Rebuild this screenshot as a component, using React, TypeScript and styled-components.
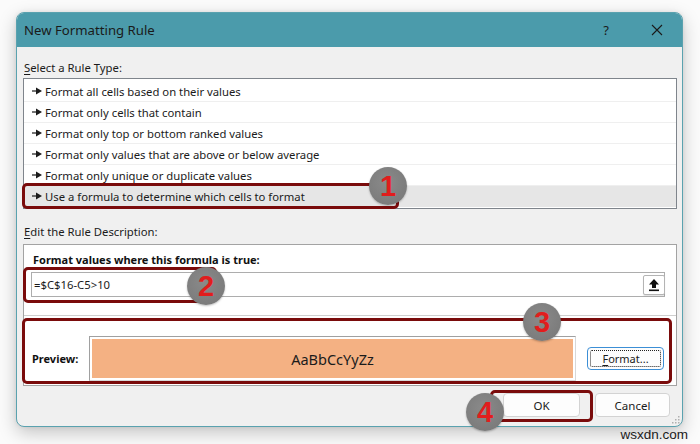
import React from 'react';
import styled, { createGlobalStyle } from 'styled-components';

const GlobalStyle = createGlobalStyle`
  html, body {
    margin: 0;
    padding: 0;
    background: #ffffff;
  }
  body {
    font-family: "Segoe UI", "Noto Sans", "Liberation Sans", sans-serif;
    color: #1b1b1b;
  }
`;

const Stage = styled.div`
  position: relative;
  width: 700px;
  height: 444px;
  overflow: hidden;
  box-sizing: border-box;
  padding: 12px 0 0 16px;
  background: #fbfbfb;
`;

const Dialog = styled.div`
  position: relative;
  width: 667px;
  height: 415px;
  box-sizing: border-box;
  display: flex;
  flex-direction: column;
  border: 1px solid #5aa2af;
  border-radius: 8px;
  background: #f0f0f0;
  box-shadow: 0 6px 18px rgba(0, 0, 0, 0.22), 0 0 4px rgba(0, 0, 0, 0.08);
  overflow: hidden;
`;

const TitleBar = styled.div`
  height: 34px;
  flex: none;
  display: flex;
  align-items: center;
  padding-left: 7px;
  background: #4b9bab;
`;

const Title = styled.div`
  flex: 1;
  font-size: 13.2px;
  color: #1a1a1a;
`;

const CaptionButton = styled.div<{ $w: number }>`
  width: ${(p) => p.$w}px;
  height: 34px;
  display: flex;
  align-items: center;
  justify-content: center;
  font-size: 13px;
  color: #1a1a1a;
`;

const Body = styled.div`
  flex: 1;
  display: flex;
  flex-direction: column;
  padding: 13px 5px 9px 6px;
`;

const SectionLabel = styled.div<{ $top?: number }>`
  font-size: 11.3px;
  line-height: 16px;
  margin-top: ${(p) => p.$top ?? 0}px;
  padding-left: 1px;
  color: #1b1b1b;
`;

const Key = styled.span`
  text-decoration: underline;
  text-underline-offset: 2px;
`;

const RuleList = styled.div`
  margin-top: 2px;
  height: 131px;
  box-sizing: border-box;
  border: 1px solid #7f858c;
  background: #ffffff;
  padding-top: 2px;
`;

const RuleRow = styled.div<{ $selected?: boolean }>`
  height: 21px;
  box-sizing: border-box;
  display: flex;
  align-items: center;
  gap: 3px;
  padding-left: 8px;
  font-size: 11.3px;
  color: #1b1b1b;
  background: ${(p) => (p.$selected ? '#e6e6e6' : 'transparent')};
  border-bottom: 1px solid ${(p) => (p.$selected ? 'transparent' : '#efefef')};
`;

const Panel = styled.div`
  margin-top: 4px;
  height: 142px;
  box-sizing: border-box;
  border: 1px solid #a3a3a3;
  background: #ffffff;
  display: flex;
  flex-direction: column;
  padding-top: 7px;
`;

const FormulaCaption = styled.div`
  font-size: 11px;
  line-height: 16px;
  font-weight: 700;
  padding-left: 9px;
  color: #111;
`;

const FormulaInput = styled.div`
  margin: 4px 11px 0 7px;
  height: 25px;
  box-sizing: border-box;
  border: 1px solid #adadad;
  display: flex;
  align-items: center;
  justify-content: space-between;
  padding: 0 0 0 2px;
  font-size: 11.3px;
  color: #1b1b1b;
`;

const CollapseButton = styled.div`
  width: 22px;
  height: 20px;
  box-sizing: border-box;
  border: 1px solid #b4b4b4;
  border-radius: 2px;
  background: #fff;
  box-shadow: 0 1px 1px rgba(0, 0, 0, 0.12);
  display: flex;
  align-items: center;
  justify-content: center;
  margin-right: -1px;
`;

const Divider = styled.div`
  margin-top: 18px;
  height: 1px;
  background: #cfcfcf;
`;

const PreviewRow = styled.div`
  flex: 1;
  display: flex;
  align-items: center;
  padding: 20px 0 4px 8px;
`;

const PreviewLabel = styled.div`
  width: 57px;
  font-size: 11px;
  font-weight: 700;
  color: #111;
`;

const Swatch = styled.div`
  width: 487px;
  height: 45px;
  box-sizing: border-box;
  border: 1px solid #a0a0a0;
  border-right-color: #d8d8d8;
  border-bottom-color: #d8d8d8;
  padding: 2px;
  background: #fff;
`;

const SwatchFill = styled.div`
  height: 100%;
  background: #f4b183;
  display: flex;
  align-items: center;
  justify-content: center;
  font-size: 14.5px;
  color: #1b1b1b;
`;

const Button = styled.div<{ $w: number; $focused?: boolean }>`
  width: ${(p) => p.$w}px;
  height: 24px;
  box-sizing: border-box;
  display: flex;
  align-items: center;
  justify-content: center;
  font-size: 11.5px;
  color: #1b1b1b;
  background: #fdfdfd;
  border: 1px solid ${(p) => (p.$focused ? '#3c8fd6' : '#d3d3d3')};
  border-radius: 4px;
  position: relative;
  ${(p) =>
    p.$focused
      ? `&::after {
          content: '';
          position: absolute;
          inset: 2px;
          border: 1px dotted #222;
          border-radius: 2px;
        }`
      : ''}
`;

const FormatButton = styled(Button)`
  margin-left: 11px;
  height: 23px;
  font-size: 11px;
`;

const Footer = styled.div`
  margin-top: 7px;
  display: flex;
  justify-content: flex-end;
  gap: 15px;
  padding-right: 7px;
`;

const Grip = styled.svg`
  position: absolute;
  right: 2px;
  bottom: 2px;
`;

// Callout outlines and numbered markers drawn over the dialog
const Callout = styled.div<{ $x: number; $y: number; $w: number; $h: number }>`
  position: absolute;
  left: ${(p) => p.$x}px;
  top: ${(p) => p.$y}px;
  width: ${(p) => p.$w}px;
  height: ${(p) => p.$h}px;
  box-sizing: border-box;
  border: 3px solid #7a0b0b;
  border-radius: 5px;
  pointer-events: none;
`;

const Marker = styled.div<{ $cx: number; $cy: number }>`
  position: absolute;
  left: ${(p) => p.$cx - 19}px;
  top: ${(p) => p.$cy - 19}px;
  width: 38px;
  height: 38px;
  border-radius: 50%;
  background: radial-gradient(circle at 45% 40%, #8a8a8a 0%, #7c7c7c 70%, #6e6e6e 100%);
  box-shadow: 0 1px 2px rgba(0, 0, 0, 0.25);
  display: flex;
  align-items: center;
  justify-content: center;
  font-family: "Liberation Sans", Arial, sans-serif;
  font-weight: 700;
  font-size: 29px;
  color: #e11d1d;
  padding-top: 1px;
  box-sizing: border-box;
`;

const Watermark = styled.div`
  position: absolute;
  right: 12px;
  bottom: 2px;
  font-family: "Liberation Sans", Arial, sans-serif;
  font-size: 13.5px;
  color: #1b1b1b;
`;

const RuleArrow = () => (
  <svg width="10" height="8" viewBox="0 0 10 8">
    <rect x="0" y="3.4" width="5" height="1.2" fill="#1b1b1b" />
    <path d="M4 0.6 L10 4 L4 7.4 Z" fill="#1b1b1b" />
  </svg>
);

const CloseGlyph = () => (
  <svg width="12" height="12" viewBox="0 0 12 12">
    <path d="M1 1 L11 11 M11 1 L1 11" stroke="#1a1a1a" strokeWidth="1.1" />
  </svg>
);

const CollapseGlyph = () => (
  <svg width="12" height="14" viewBox="0 0 12 14">
    <path d="M6 1 L11 6.5 L8 6.5 L8 10 L4 10 L4 6.5 L1 6.5 Z" fill="#111" />
    <rect x="1" y="11.5" width="10" height="1.6" fill="#111" />
  </svg>
);

const rules = [
  'Format all cells based on their values',
  'Format only cells that contain',
  'Format only top or bottom ranked values',
  'Format only values that are above or below average',
  'Format only unique or duplicate values',
  'Use a formula to determine which cells to format',
];

const markers = [
  { n: 1, cx: 388, cy: 186 },
  { n: 2, cx: 206, cy: 286 },
  { n: 3, cx: 542, cy: 322 },
  { n: 4, cx: 485, cy: 412 },
];

export default function App() {
  return (
    <Stage>
      <GlobalStyle />
      <Dialog>
        <TitleBar>
          <Title>New Formatting Rule</Title>
          <CaptionButton $w={40}>?</CaptionButton>
          <CaptionButton $w={9} />
          <CaptionButton $w={44}>
            <CloseGlyph />
          </CaptionButton>
          <CaptionButton $w={3} />
        </TitleBar>

        <Body>
          <SectionLabel>
            <Key>S</Key>elect a Rule Type:
          </SectionLabel>
          <RuleList>
            {rules.map((r, i) => (
              <RuleRow key={r} $selected={i === rules.length - 1}>
                <RuleArrow />
                {r}
              </RuleRow>
            ))}
          </RuleList>

          <SectionLabel $top={15}>
            <Key>E</Key>dit the Rule Description:
          </SectionLabel>
          <Panel>
            <FormulaCaption>Format values where this formula is true:</FormulaCaption>
            <FormulaInput>
              =$C$16-C5&gt;10
              <CollapseButton>
                <CollapseGlyph />
              </CollapseButton>
            </FormulaInput>
            <Divider />
            <PreviewRow>
              <PreviewLabel>Preview:</PreviewLabel>
              <Swatch>
                <SwatchFill>AaBbCcYyZz</SwatchFill>
              </Swatch>
              <FormatButton $w={77} $focused>
                <span>
                  <Key>F</Key>ormat...
                </span>
              </FormatButton>
            </PreviewRow>
          </Panel>

          <Footer>
            <Button $w={77}>OK</Button>
            <Button $w={75}>Cancel</Button>
          </Footer>
        </Body>

        <Grip width="9" height="9" viewBox="0 0 9 9">
          <rect x="7" y="1" width="1.5" height="1.5" fill="#b0b0b0" />
          <rect x="4" y="4" width="1.5" height="1.5" fill="#b0b0b0" />
          <rect x="7" y="4" width="1.5" height="1.5" fill="#b0b0b0" />
          <rect x="1" y="7" width="1.5" height="1.5" fill="#b0b0b0" />
          <rect x="4" y="7" width="1.5" height="1.5" fill="#b0b0b0" />
          <rect x="7" y="7" width="1.5" height="1.5" fill="#b0b0b0" />
        </Grip>
      </Dialog>

      <Callout $x={22} $y={183} $w={377} $h={26} />
      <Callout $x={23} $y={267} $w={194} $h={36} />
      <Callout $x={22} $y={318} $w={650} $h={66} />
      <Callout $x={490} $y={390} $w={103} $h={32} />
      {markers.map((m) => (
        <Marker key={m.n} $cx={m.cx} $cy={m.cy}>
          {m.n}
        </Marker>
      ))}

      <Watermark>wsxdn.com</Watermark>
    </Stage>
  );
}
